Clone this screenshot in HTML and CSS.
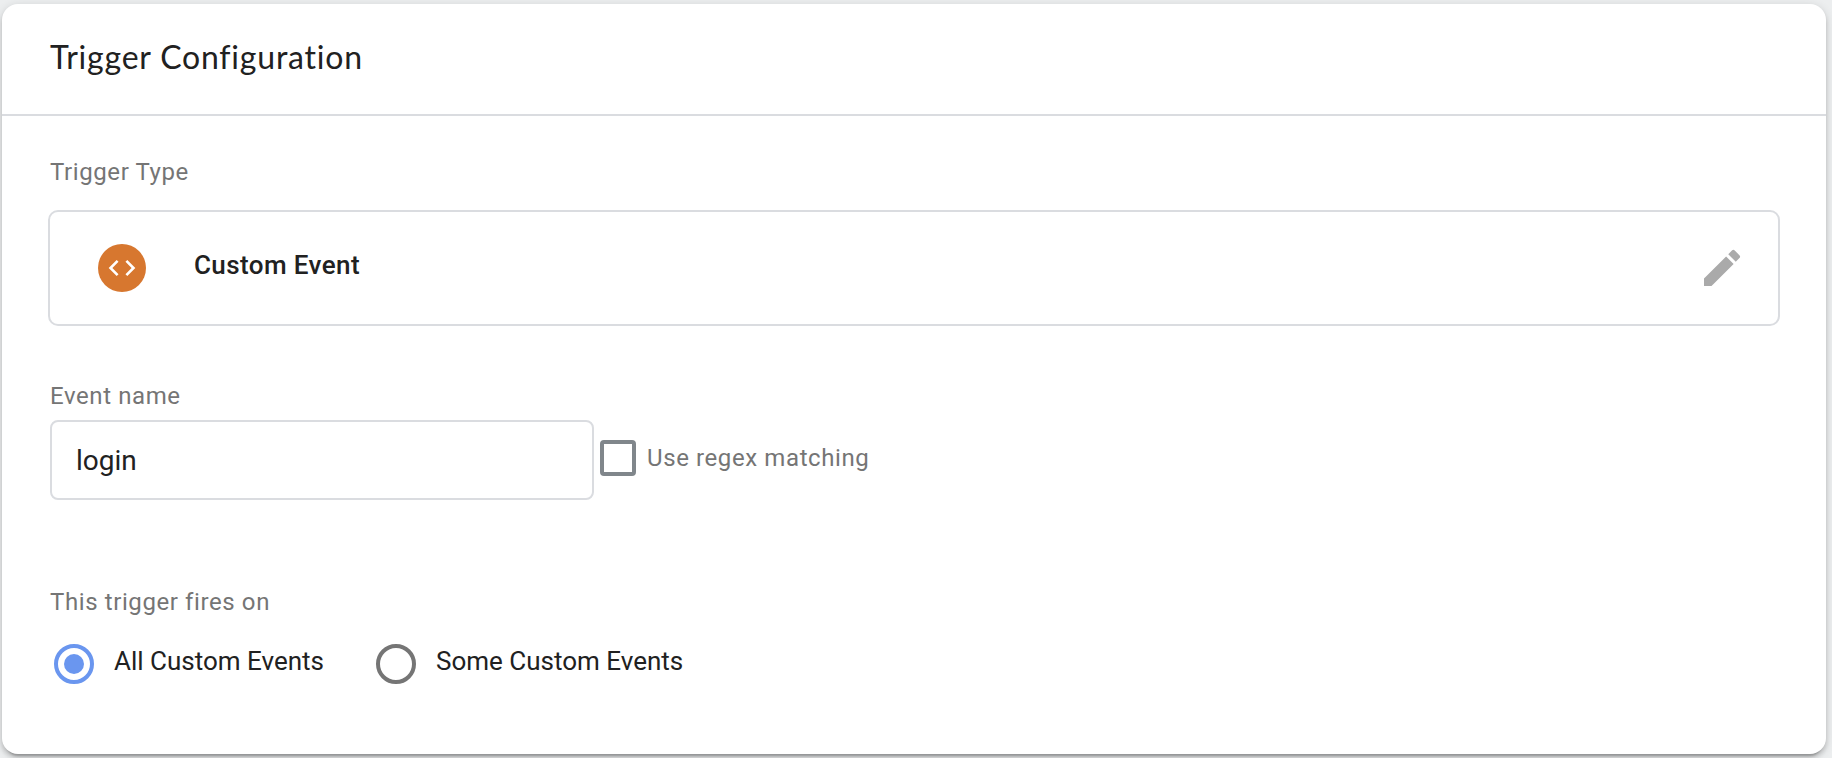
FILE: index.html
```html
<!DOCTYPE html>
<html lang="en">
<head>
<meta charset="utf-8">
<title>Trigger Configuration</title>
<link rel="stylesheet" href="styles.css">
</head>
<body>
<main class="card">
  <header class="card-header"><h1 class="title">Trigger Configuration</h1></header>
  <div class="card-body">
    <div class="label">Trigger Type</div>
    <div class="type-box">
      <span class="type-icon">
        <svg width="32" height="32" viewBox="0 0 24 24" fill="#fff"><path d="M9.4 16.6L4.8 12l4.6-4.6L8 6l-6 6 6 6 1.4-1.4zm5.2 0l4.6-4.6-4.6-4.6L16 6l6 6-6 6-1.4-1.4z"/></svg>
      </span>
      <span class="type-name">Custom Event</span>
      <svg class="edit" width="48" height="48" viewBox="0 0 24 24"><path d="M3 17.25V21h3.75L17.81 9.94l-3.75-3.75L3 17.25zM20.71 7.04a.996.996 0 0 0 0-1.41l-2.34-2.34a.996.996 0 0 0-1.41 0l-1.83 1.83 3.75 3.75 1.83-1.83z"/></svg>
    </div>
    <div class="label event-label">Event name</div>
    <div class="event-row">
      <div class="input">login</div>
      <span class="checkbox"></span>
      <span class="label regex-label">Use regex matching</span>
    </div>
    <div class="label fires-label">This trigger fires on</div>
    <div class="radios">
      <div class="option option-all"><span class="radio radio-on"></span><span class="option-text">All Custom Events</span></div>
      <div class="option"><span class="radio"></span><span class="option-text">Some Custom Events</span></div>
    </div>
  </div>
</main>
</body>
</html>
```
FILE: styles.css
```css
* { box-sizing: border-box; }
body {
  margin: 0;
  height: 758px;
  padding: 4px 6px 4px 2px;
  overflow: hidden;
  background: #eceeef;
  font-family: Roboto, "Liberation Sans", sans-serif;
  color: #212121;
}
.card {
  height: 750px;
  background: #fff;
  border-radius: 16px;
  box-shadow: 0 4px 4px rgba(0, 0, 0, .14), 0 6px 2px -4px rgba(0, 0, 0, .2), 0 2px 10px rgba(0, 0, 0, .14);
}
.card-header {
  height: 112px;
  padding: 31px 48px 0;
  border-bottom: 2px solid #dadce0;
}
.title {
  margin: 0;
  font: 400 32px/44px Lato, sans-serif;
  letter-spacing: .8px;
}
.card-body { padding: 40px 46px 0; }
.label {
  padding-left: 2px;
  font-size: 24px;
  line-height: 32px;
  letter-spacing: .6px;
  color: #757575;
}
.type-box {
  display: flex;
  align-items: center;
  height: 116px;
  margin-top: 22px;
  padding: 0 32px 0 48px;
  border: 2px solid #dadce0;
  border-radius: 10px;
}
.type-icon {
  display: flex;
  align-items: center;
  justify-content: center;
  width: 48px;
  height: 48px;
  border-radius: 50%;
  background: #d7772f;
}
.type-name {
  flex: 1;
  padding: 0 0 6px 48px;
  font-size: 26px;
  line-height: 32px;
  font-weight: 500;
  letter-spacing: .4px;
}
.edit { fill: #aaa; }
.event-label { margin-top: 54px; }
.event-row {
  display: flex;
  align-items: center;
  margin-top: 8px;
  padding-left: 2px;
}
.input {
  width: 544px;
  height: 80px;
  padding: 0 24px;
  border: 2px solid #dadce0;
  border-radius: 8px;
  font-size: 28px;
  line-height: 78px;
}
.checkbox {
  width: 36px;
  height: 36px;
  margin: 0 9px 4px 6px;
  border: 4px solid #80868b;
  border-radius: 4px;
}
.regex-label { padding-bottom: 4px; }
.fires-label { margin-top: 86px; }
.radios {
  display: flex;
  gap: 52px;
  margin-top: 26px;
  padding-left: 6px;
}
.option { display: flex; align-items: center; }
.radio {
  display: flex;
  flex-shrink: 0;
  align-items: center;
  justify-content: center;
  width: 40px;
  height: 40px;
  border: 4px solid #757575;
  border-radius: 50%;
}
.radio-on { border-color: #6a96ef; }
.radio-on::after {
  content: "";
  width: 20px;
  height: 20px;
  border-radius: 50%;
  background: #6a96ef;
}
.option-text {
  padding: 0 0 6px 20px;
  font-size: 26px;
  line-height: 32px;
}
.option-all { width: 270px; white-space: nowrap; }
```
